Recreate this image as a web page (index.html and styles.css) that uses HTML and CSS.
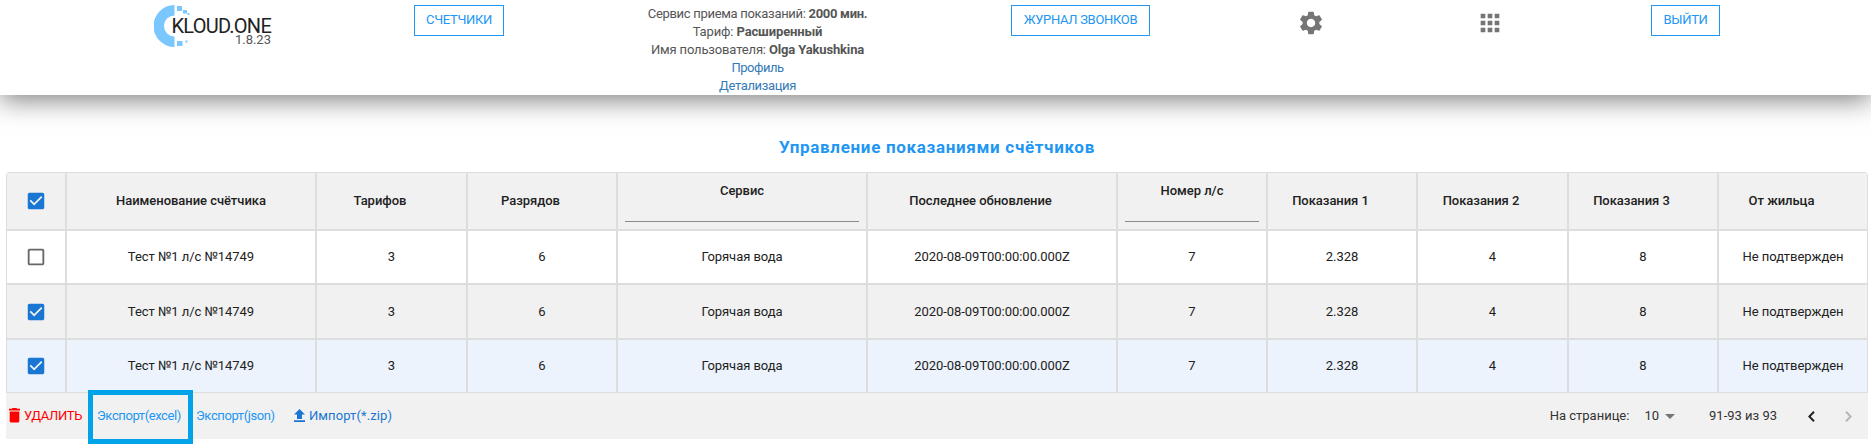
FILE: index.html
```html
<!DOCTYPE html>
<html lang="ru">
<head>
<meta charset="utf-8">
<title>Управление показаниями счётчиков</title>
<link rel="stylesheet" href="styles.css">
</head>
<body>
<svg class="sprite" aria-hidden="true">
  <symbol id="checked" viewBox="0 0 24 24"><path d="M19 3H5c-1.11 0-2 .9-2 2v14c0 1.1.89 2 2 2h14c1.11 0 2-.9 2-2V5c0-1.100-.89-2-2-2zm-9 14l-5-5 1.410-1.410L10 14.170l7.590-7.590L19 8l-9 9z"/></symbol>
  <symbol id="unchecked" viewBox="0 0 24 24"><path d="M19 5v14H5V5h14m0-2H5c-1.100 0-2 .9-2 2v14c0 1.100.9 2 2 2h14c1.100 0 2-.9 2-2V5c0-1.100-.9-2-2-2z"/></symbol>
</svg>

<header class="topbar">
  <div class="brand">
    <svg class="brand-mark" viewBox="0 0 38 44" width="38" height="44">
      <path fill="#7ac7ff" d="M20.500 1A21 21 0 0 0 20.500 43V32.500A10.500 10.500 0 0 1 20.500 11.500Z"/>
      <path fill="#7ac7ff" d="M23 2h5v5h-5zM29 6h4v3.500h-4zM33.500 9h2v2h-2zM23 37h5.500v5H23zM31.500 36.500h2v2h-2z"/>
    </svg>
    <div class="brand-text">
      <span class="brand-name">KLOUD.ONE</span>
      <span class="brand-version">1.8.23</span>
    </div>
  </div>
  <a class="btn btn-meters"><span>СЧЕТЧИКИ</span></a>
  <div class="account">
    <div class="minutes">Сервис приема показаний: <b>2000 мин.</b></div>
    <div class="tariff">Тариф: <b>Расширенный</b></div>
    <div class="user">Имя пользователя: <b>Olga Yakushkina</b></div>
    <a class="profile">Профиль</a>
    <a class="details">Детализация</a>
  </div>
  <a class="btn btn-calls"><span>ЖУРНАЛ ЗВОНКОВ</span></a>
  <svg class="nav-icon gear" viewBox="0 0 24 24"><path d="M19.140 12.940c.04-.3.06-.61.06-.94 0-.32-.02-.64-.07-.94l2.030-1.580c.18-.14.23-.41.12-.61l-1.920-3.320c-.12-.22-.37-.29-.59-.22l-2.390.96c-.5-.38-1.030-.7-1.620-.94l-.36-2.540c-.04-.24-.24-.41-.48-.41h-3.840c-.24 0-.43.17-.47.41l-.36 2.540c-.59.24-1.130.57-1.620.94l-2.390-.96c-.22-.08-.47 0-.59.22L2.740 8.870c-.12.21-.08.47.12.61l2.030 1.580c-.05.3-.09.63-.09.94s.02.64.07.94l-2.030 1.580c-.18.14-.23.41-.12.61l1.920 3.320c.12.22.37.29.59.22l2.390-.96c.5.38 1.030.7 1.620.94l.36 2.540c.05.24.24.41.48.41h3.840c.24 0 .44-.17.47-.41l.36-2.540c.59-.24 1.130-.56 1.620-.94l2.390.96c.22.08.47 0 .59-.22l1.920-3.320c.12-.22.07-.47-.12-.61l-2.010-1.580zM12 15.600c-1.980 0-3.600-1.620-3.600-3.600s1.620-3.600 3.600-3.600 3.600 1.620 3.600 3.600-1.620 3.600-3.600 3.600z"/></svg>
  <svg class="nav-icon apps" viewBox="0 0 24 24"><path d="M4 8h4V4H4v4zm6 12h4v-4h-4v4zm-6 0h4v-4H4v4zm0-6h4v-4H4v4zm6 0h4v-4h-4v4zm6-10v4h4V4h-4zm-6 4h4V4h-4v4zm6 6h4v-4h-4v4zm0 6h4v-4h-4v4z"/></svg>
  <a class="btn btn-exit"><span>ВЫЙТИ</span></a>
</header>

<main>
  <h1 class="title"><span>Управление показаниями счётчиков</span></h1>

  <div class="table">
    <div class="cell head"><svg class="box on"><use href="#checked"/></svg></div>
    <div class="cell head">Наименование счётчика</div>
    <div class="cell head sortable">Тарифов</div>
    <div class="cell head sortable">Разрядов</div>
    <div class="cell head filter">Сервис<i></i></div>
    <div class="cell head sortable">Последнее обновление</div>
    <div class="cell head filter">Номер л/с<i></i></div>
    <div class="cell head sortable">Показания 1</div>
    <div class="cell head sortable">Показания 2</div>
    <div class="cell head sortable">Показания 3</div>
    <div class="cell head sortable">От жильца</div>

    <div class="cell"><svg class="box"><use href="#unchecked"/></svg></div>
    <div class="cell">Тест №1 л/с №14749</div>
    <div class="cell">3</div>
    <div class="cell">6</div>
    <div class="cell">Горячая вода</div>
    <div class="cell">2020-08-09T00:00:00.000Z</div>
    <div class="cell">7</div>
    <div class="cell">2.328</div>
    <div class="cell">4</div>
    <div class="cell">8</div>
    <div class="cell">Не подтвержден</div>

    <div class="cell alt"><svg class="box on"><use href="#checked"/></svg></div>
    <div class="cell alt">Тест №1 л/с №14749</div>
    <div class="cell alt">3</div>
    <div class="cell alt">6</div>
    <div class="cell alt">Горячая вода</div>
    <div class="cell alt">2020-08-09T00:00:00.000Z</div>
    <div class="cell alt">7</div>
    <div class="cell alt">2.328</div>
    <div class="cell alt">4</div>
    <div class="cell alt">8</div>
    <div class="cell alt">Не подтвержден</div>

    <div class="cell active"><svg class="box on"><use href="#checked"/></svg></div>
    <div class="cell active">Тест №1 л/с №14749</div>
    <div class="cell active">3</div>
    <div class="cell active">6</div>
    <div class="cell active">Горячая вода</div>
    <div class="cell active">2020-08-09T00:00:00.000Z</div>
    <div class="cell active">7</div>
    <div class="cell active">2.328</div>
    <div class="cell active">4</div>
    <div class="cell active">8</div>
    <div class="cell active">Не подтвержден</div>
  </div>

  <footer class="footer">
    <a class="action delete">
      <svg viewBox="0 0 11 15" width="11" height="15"><path d="M3.500 0h4l.7.800H11v1.700H0V.8h2.800zM.7 3.400h9.600V13q0 1.500-1.500 1.500H2.200Q.7 14.500.7 13z"/></svg>
      <span>УДАЛИТЬ</span>
    </a>
    <a class="action excel"><span>Экспорт(excel)</span><i class="frame"></i></a>
    <a class="action json"><span>Экспорт(json)</span></a>
    <a class="action import">
      <svg viewBox="0 0 11 13" width="11" height="13"><path d="M5.500 0L11 5.500H8V10H3V5.500H0zM0 11.200h11V13H0z"/></svg>
      <span>Импорт(*.zip)</span>
    </a>
    <div class="pager">
      <span class="per-page">На странице:</span>
      <span class="size">10</span>
      <svg class="caret" viewBox="0 0 10 5" width="10" height="5"><path d="M0 0h10L5 5z"/></svg>
      <span class="range">91-93 из 93</span>
      <svg class="prev" viewBox="0 0 7 11" width="7" height="11"><path d="M6 .7L1.300 5.500 6 10.300"/></svg>
      <svg class="next" viewBox="0 0 7 11" width="7" height="11"><path d="M1 .7L5.700 5.500 1 10.300"/></svg>
    </div>
  </footer>
</main>
</body>
</html>
```
FILE: styles.css
```css
* { box-sizing: border-box; }
body {
  margin: 0;
  height: 444px;
  overflow: hidden;
  background: #fff;
  font: 13px/18px Roboto, "Open Sans", sans-serif;
  color: #212121;
  white-space: nowrap;
}
.sprite { display: none; }
svg { display: block; flex: none; }

.topbar {
  display: flex;
  align-items: flex-start;
  height: 95px;
  background: #fff;
  box-shadow: 0 5px 25px rgba(0, 0, 0, .5);
}
.brand { display: flex; width: 117px; margin: 4px 0 0 154px; }
.brand-mark { margin-right: -19px; }
.brand-text { display: flex; flex-direction: column; align-items: flex-end; width: 98px; padding-top: 14px; }
.brand-name { font-size: 20px; line-height: 16px; letter-spacing: -.75px; color: #222; }
.brand-version { line-height: 12px; color: #555; }

.btn {
  display: flex;
  justify-content: center;
  height: 31px;
  margin-top: 5px;
  padding-top: 5px;
  border: 1px solid #2196f3;
  color: #2196f3;
  letter-spacing: -.3px;
}
.btn-meters { width: 90px; margin-left: 143px; }
.btn-calls { width: 139px; margin-left: 134px; }
.btn-exit { width: 69px; margin-left: 147px; }

.account {
  display: flex;
  flex-direction: column;
  align-items: center;
  width: 241px;
  margin: 0 -1px 0 133px;
  padding-top: 5px;
  color: #555;
}
.account b { font-weight: 700; }
.account a { color: #337ab7; }
.minutes { letter-spacing: -.3px; }
.tariff { letter-spacing: -.13px; }
.user { letter-spacing: -.15px; }
.profile { letter-spacing: -.5px; }
.details { letter-spacing: -.35px; }

.nav-icon { width: 28px; height: 28px; margin-top: 9px; fill: #757575; }
.gear { margin-left: 147px; }
.apps { margin-left: 151px; }

.title {
  margin: 0;
  padding: 41px 0 0 3px;
  height: 77px;
  text-align: center;
  font-size: 17px;
  line-height: 22px;
  font-weight: 700;
  letter-spacing: .68px;
  color: #2196f3;
}

.table {
  display: grid;
  grid-template-columns: 58px 248px 149px 148px 248px 248px 148px 148px 149px 148px 148px;
  grid-template-rows: 56px 52px 53px 52px;
  gap: 2px;
  width: 1862px;
  margin-left: 6px;
  border: 1px solid #ddd;
  border-radius: 3px 3px 0 0;
  background: #ddd;
  letter-spacing: -.04px;
}
.cell { display: flex; align-items: center; justify-content: center; background: #fff; }
.head { background: #f1f1f1; font-weight: 500; }
.alt { background: #f1f1f1; }
.active { background: #ecf3fc; }
.sortable { padding-right: 23px; }
.filter { flex-direction: column; align-items: stretch; justify-content: flex-start; padding: 9px 7px 0; text-align: center; }
.filter i { height: 1px; margin-top: 21px; background: #8a8a8a; }
.box { width: 22px; height: 22px; fill: #666; }
.box.on { fill: #1976d2; }

.footer {
  display: flex;
  align-items: center;
  height: 46px;
  width: 1862px;
  margin-left: 6px;
  padding-left: 3px;
  background: #f1f1f1;
  color: #333;
}
.action { display: flex; align-items: center; color: #2196f3; letter-spacing: -.4px; }
.action svg { margin-top: -2px; }
.delete { width: 88px; gap: 4px; color: #f00; fill: #f00; letter-spacing: -.35px; }
.excel { position: relative; width: 99px; }
.frame { position: absolute; left: -9px; top: -17px; width: 105px; height: 54px; border: 5px solid #00a2e8; }
.json { width: 98px; }
.import { gap: 4px; color: #1976d2; fill: #1976d2; letter-spacing: .1px; }
.pager { display: flex; align-items: center; margin-left: auto; padding-right: 16px; }
.size { margin-left: 15px; }
.caret { margin-left: 6px; fill: #757575; }
.range { margin-left: 34px; }
.prev, .next { fill: none; stroke: #222; stroke-width: 2; }
.prev { margin-left: 31px; }
.next { margin-left: 30px; stroke: #b5b5b5; }
```
